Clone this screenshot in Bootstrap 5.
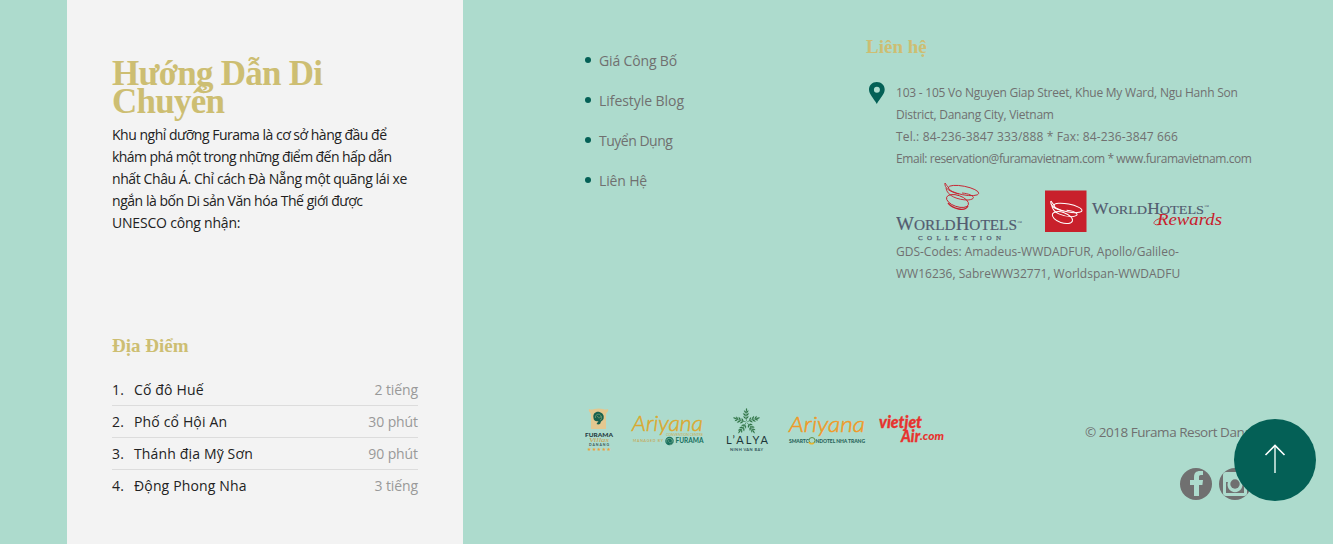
<!DOCTYPE html>
<html lang="vi">
<head>
<meta charset="utf-8">
<meta name="viewport" content="width=device-width, initial-scale=1">
<title>Furama Resort Danang</title>
<link href="https://cdn.jsdelivr.net/npm/bootstrap@5.3.0/dist/css/bootstrap.min.css" rel="stylesheet">
<style>
body{background:#addbcd;font-family:"Open Sans","Noto Sans",sans-serif;font-size:14px;line-height:22px;color:#707070}
.page{height:544px}
.guide{width:396px;margin-left:67px;padding:60px 45px 0;background:#f3f3f3;color:#222}
.gold{font-family:"Liberation Serif",serif;font-weight:700;color:#cdbe72}
.guide h1{font-size:35px;line-height:28px;margin-bottom:8px;letter-spacing:-.75px}
.guide p{height:110px;font-size:14px}
.p1{letter-spacing:-.49px}.p2{letter-spacing:-.57px}.p3{letter-spacing:-.4px}.p4{letter-spacing:-.46px}.p5{letter-spacing:-.2px}
.sub-title{font-size:19px;line-height:24px}
.guide .sub-title{margin:100px 0 16px}
.places li{height:32px;line-height:32px;border-bottom:1px solid #dcdcdc;letter-spacing:.15px}
.places li:last-child{border:0}
.places .num{width:22px}
.places .time{color:#999;letter-spacing:-.1px}
.site-footer{padding-left:122px}
.upper{height:401px}
.links{width:281px;padding-top:41px}
.links li{height:40px;line-height:40px;gap:8px;letter-spacing:-.15px}
.links li::before{content:"";width:6px;height:6px;border-radius:50%;background:#046056;margin-top:-2px}
.links .tight{letter-spacing:-.5px}
.links .wide{letter-spacing:-.05px}
.contact{width:400px;padding-top:35px}
.address{font-size:12px;gap:10px;margin-top:22px}
.address .pin{width:20px;height:24px}
.address .lines{padding-top:1px}
.lines span{display:block;white-space:nowrap}
.a1{letter-spacing:-.23px}.a2{letter-spacing:-.27px}.a3{letter-spacing:.14px}.a4{letter-spacing:-.43px}
.brands{height:60px}
.copy{width:181px;padding-top:20px;white-space:nowrap;font-size:13.5px;letter-spacing:-.48px}
.social{margin:16px 0 0 95px;gap:7px}
.to-top{position:fixed;left:1234px;top:419px;width:82px;height:82px;border-radius:50%;background:#046056}
svg{display:block}
</style>
</head>
<body>
<div class="page d-flex overflow-hidden">
<section class="guide flex-shrink-0">
  <h1 class="gold text-nowrap">Hướng Dẫn Di<br>Chuyển</h1>
  <p class="lines mb-0"><span class="p1">Khu nghỉ dưỡng Furama là cơ sở hàng đầu để</span><span class="p2">khám phá một trong những điểm đến hấp dẫn</span><span class="p3">nhất Châu Á. Chỉ cách Đà Nẵng một quãng lái xe</span><span class="p4">ngắn là bốn Di sản Văn hóa Thế giới được</span><span class="p5">UNESCO công nhận:</span></p>
  <h2 class="gold sub-title">Địa Điểm</h2>
  <ul class="places list-unstyled mb-0">
    <li class="d-flex"><span class="num">1.</span><span>Cố đô Huế</span><span class="time ms-auto">2 tiếng</span></li>
    <li class="d-flex"><span class="num">2.</span><span>Phố cổ Hội An</span><span class="time ms-auto">30 phút</span></li>
    <li class="d-flex"><span class="num">3.</span><span>Thánh địa Mỹ Sơn</span><span class="time ms-auto">90 phút</span></li>
    <li class="d-flex"><span class="num">4.</span><span>Động Phong Nha</span><span class="time ms-auto">3 tiếng</span></li>
  </ul>
</section>
<footer class="site-footer flex-grow-1">
  <div class="upper d-flex">
    <ul class="links list-unstyled mb-0 flex-shrink-0">
      <li class="d-flex align-items-center">Giá Công Bố</li>
      <li class="d-flex align-items-center wide">Lifestyle Blog</li>
      <li class="d-flex align-items-center tight">Tuyển Dụng</li>
      <li class="d-flex align-items-center">Liên Hệ</li>
    </ul>
    <div class="contact flex-shrink-0">
      <h2 class="gold sub-title mb-0">Liên hệ</h2>
      <div class="address d-flex">
        <svg class="pin flex-shrink-0" viewBox="0 0 20 24"><path fill="#046056" fill-rule="evenodd" d="M10.800 1C6.200 1 3 4.200 3 8.500c0 4.800 4.500 8.500 7.800 14.500C14.100 17 18.700 13.300 18.700 8.500 18.700 4.200 15.400 1 10.800 1Zm.1 4.800a3 3 0 1 1 0 6 3 3 0 0 1 0-6Z"/></svg>
        <div class="lines">
          <span class="a1">103 - 105 Vo Nguyen Giap Street, Khue My Ward, Ngu Hanh Son</span><span class="a2">District, Danang City, Vietnam</span><span class="a3">Tel.: 84-236-3847 333/888 * Fax: 84-236-3847 666</span><span class="a4">Email: reservation@furamavietnam.com * www.furamavietnam.com</span>
          <svg width="340" height="71" viewBox="896 170 340 71">
            <defs><g id="swirl" fill="none"><path d="M1 0C0 5 6 9 15 11"/><path d="M1 0Q3 3 5 5"/><ellipse cx="19.500" cy="7.500" rx="15.500" ry="4.300" transform="rotate(11 19.500 7.500)"/><path d="M2 5C3 13 14 17 24 17 34 16 29 11 18 10"/><ellipse cx="13.500" cy="18" rx="11.500" ry="5.600" transform="rotate(19 13.500 18)"/></g></defs>
            <use href="#swirl" transform="translate(944 183)" stroke="#c7212e" stroke-width=".9"/>
            <path d="M948 203c5 6 17 9 20 3" stroke="#c7212e" stroke-width="1.300" fill="none"/>
            <g font-family="Liberation Serif,serif" fill="#535c70">
              <text x="896" y="230" font-size="18" textLength="121" lengthAdjust="spacingAndGlyphs" stroke="#535c70" stroke-width=".2">W<tspan font-size="14.500">ORLD</tspan>H<tspan font-size="14.500">OTELS</tspan></text><text x="1017" y="224" font-size="5">™</text>
              <text x="918" y="239.500" font-size="7" textLength="83" stroke="#535c70" stroke-width=".25">COLLECTION</text>
              <rect x="1045" y="190.500" width="41.500" height="41.500" fill="#c8202b"/>
              <text x="1092" y="214" font-size="16.500" textLength="112" lengthAdjust="spacingAndGlyphs" stroke="#535c70" stroke-width=".15">W<tspan font-size="13.500">ORLD</tspan>H<tspan font-size="13.500">OTELS</tspan></text><text x="1204" y="208" font-size="5">™</text>
              <text x="1157" y="224.500" font-size="17" font-style="italic" fill="#c8202b" textLength="65" lengthAdjust="spacingAndGlyphs">Rewards</text>
            </g>
            <use href="#swirl" transform="translate(1050 201) scale(.92)" stroke="#fff" stroke-width="1.100"/>
            <path d="M1161 224c-5 2-9 0-6-3 2-2 6-3 9-3" fill="none" stroke="#c8202b" stroke-width=".8"/>
          </svg>
          <span class="a5">GDS-Codes: Amadeus-WWDADFUR, Apollo/Galileo-</span><span class="a6">WW16236, SabreWW32771, Worldspan-WWDADFU</span>
        </div>
      </div>
    </div>
  </div>
  <div class="d-flex">
    <svg class="brands flex-shrink-0" width="500" height="60" viewBox="585 401 500 60">
      <defs><g id="rose"><circle r="5" fill="#17705e"/><path d="M-3 2c-2-5 4-7 6-3 1 4-5 4-4 0M-4-1c2-3 7-3 8 1M0 4c3 1 5-2 4-4" fill="none" stroke="#8cb99a" stroke-width=".6"/></g>
      <g id="frond" fill="#2c7142" stroke="#2c7142" stroke-width=".3"><path d="M0-1Q-1.500-8 0-15" fill="none" stroke-width=".7"/><path d="M-.8-4q-2.500-.3-3-3 2.500.3 3 3Zm0-3.500q-2.800-.3-3.300-3.300 2.800.3 3.300 3.300Zm.3-3.500q-2.300-.3-2.500-3 2.300.5 2.500 3ZM-.5-4q2.500-.3 3-3-2.500.3-3 3Zm0-3.500q2.800-.3 3.300-3.300-2.800.3-3.300 3.300Zm.3-3.500q2.300-.3 2.500-3-2.300.5-2.500 3ZM0-13q-1.300-2 0-4 1.300 2 0 4Z"/></g></defs>
      <path d="M589 409q3 1 5 0 5-1 9 0 3 1 5 0c1 3-2 3-2 6v14h-15v-14c0-3-3-3-2-6Z" fill="#e4c890"/>
      <path d="M593.500 418c-1-5 3-7 6-6s5 3 4 7c-1 2-3 2-3 4 0 1-2 2-4 1l2-3c-3 1-5-1-5-3Z" fill="#17604e"/>
      <path d="M595.500 418c-1-3 3-5 5-3 2 3-3 4-3 1M600 420c2 0 2-3 1-4" fill="none" stroke="#9bae7d" stroke-width=".6"/>
      <g font-family="Lato,sans-serif">
      <text x="585" y="436.500" font-size="6" font-weight="900" fill="#273c42" textLength="28" lengthAdjust="spacingAndGlyphs">FURAMA</text>
      <text x="589" y="442" font-size="7" font-style="italic" fill="#cba04e" textLength="20" font-family="Liberation Serif" lengthAdjust="spacingAndGlyphs">Villas</text>
      <text x="589" y="446" font-size="3.500" font-weight="700" fill="#3d5656" textLength="20">DANANG</text>
      <text x="587" y="451" font-size="5" fill="#eba33d" font-family="DejaVu Sans" textLength="24">★★★★★</text>
      <g font-style="italic" font-size="22" font-weight="300" stroke-width=".5"><text x="632" y="431" fill="#dba92f" stroke="#dba92f" textLength="71" lengthAdjust="spacingAndGlyphs">Ariyana</text><text x="789" y="432" fill="#f09a27" stroke="#f09a27" textLength="76" lengthAdjust="spacingAndGlyphs">Ariyana</text></g>
      <text x="666" y="436" font-size="3.500" fill="#c9ae55" textLength="37">CONVENTION CENTRE</text>
      <text x="633" y="442" font-size="3.500" fill="#c9a03e" textLength="30">MANAGED BY</text>
      <use href="#rose" transform="translate(669.500 441) scale(.85)"/>
      <text x="675.500" y="443" font-size="6.500" font-weight="700" fill="#17705e" textLength="28" lengthAdjust="spacingAndGlyphs">FURAMA</text>
      <g transform="translate(746.500 422) scale(.82)"><use href="#frond"/><use href="#frond" transform="rotate(72)"/><use href="#frond" transform="rotate(144)"/><use href="#frond" transform="rotate(216)"/><use href="#frond" transform="rotate(288)"/></g>
      <text x="726" y="444" font-size="11" fill="#1d3638" textLength="42">L’ALYA</text>
      <text x="730" y="451" font-size="4" font-weight="700" fill="#34545a" textLength="33">NINH VAN BAY</text>
      <text x="789" y="443" font-size="5" font-weight="900" fill="#29645a" textLength="20">SMARTC</text><text x="815.500" y="443" font-size="5" font-weight="900" fill="#29645a" textLength="49.500">NDOTEL NHA TRANG</text>
      <circle cx="812" cy="440.500" r="3" fill="#addbcd" stroke="#5d8d48"/><path d="M809 442q1 3 5 1" stroke="#e9b42d" fill="none" stroke-width="1.500"/>
      <g fill="#e7332f" stroke="#e7332f" stroke-width=".3" font-weight="900" font-style="italic"><text x="879" y="428" font-size="16" textLength="43" lengthAdjust="spacingAndGlyphs">vietjet</text><text x="901" y="442" font-size="16" textLength="19" lengthAdjust="spacingAndGlyphs">Air</text><text x="920" y="440" font-size="12" textLength="24" lengthAdjust="spacingAndGlyphs" stroke="none">.com</text></g>
      </g>
    </svg>
    <div class="copy"><span>© 2018 Furama Resort Danang</span>
      <div class="social d-flex">
        <svg width="32" height="50" viewBox="0 0 32 50"><circle cx="16" cy="25" r="16" fill="#707070"/><path fill="#addbcd" d="M14 37V26h-4v-5h4v-3c0-4 2-6 6-6h3v4h-2c-2 0-2 1-2 2v3h4l-.6 5H19v11Z"/></svg>
        <svg width="32" height="50" viewBox="0 0 32 50"><circle cx="16" cy="25" r="16" fill="#707070"/><path fill="#addbcd" fill-rule="evenodd" d="M7 13h18q3 0 3 3v18q0 3-3 3H7q-3 0-3-3V16q0-3 3-3Zm0 10v11h18V23h-2a7.500 7.500 0 1 1-14 0Zm15-7v4h4v-4Z"/><circle cx="16" cy="25" r="4.700" fill="#707070"/></svg>
      </div>
    </div>
  </div>
</footer>
</div>
<a class="to-top" href="#" aria-label="Top"><svg width="82" height="82"><path d="M41 54V27" stroke="#d4eae4" stroke-width="1.600" fill="none"/><path d="M31.500 36 41 26.500 50.500 36" stroke="#fff" stroke-width="1.600" fill="none"/></svg></a>
<script src="https://cdn.jsdelivr.net/npm/bootstrap@5.3.0/dist/js/bootstrap.bundle.min.js"></script>
</body>
</html>
